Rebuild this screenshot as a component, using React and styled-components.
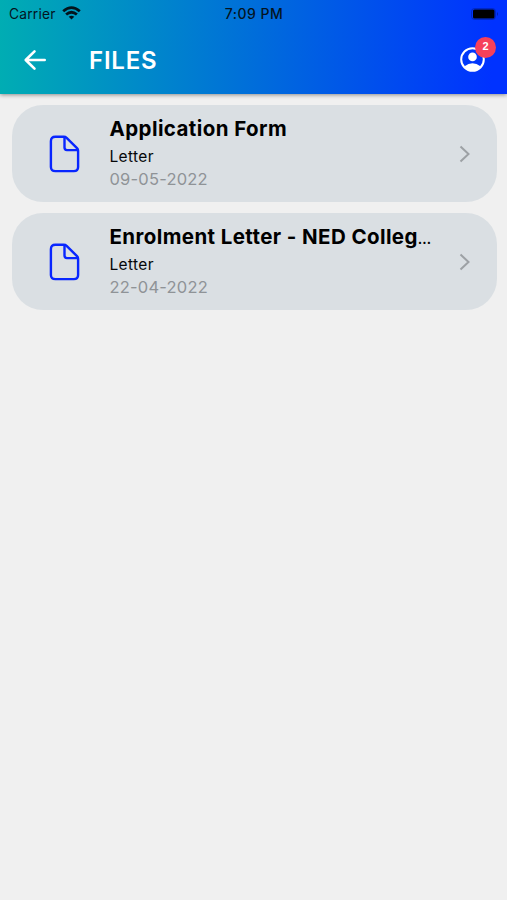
import React from 'react';
import styled, { createGlobalStyle } from 'styled-components';

const GlobalStyle = createGlobalStyle`
  *, *::before, *::after { box-sizing: border-box; }
  body { margin: 0; background: #f0f0f0; }
`;

const Screen = styled.main`
  width: 100%;
  min-height: 100vh;
  background: #f0f0f0;
  font-family: Inter, "Open Sans", sans-serif;
  color: #050709;
`;

const Header = styled.header`
  position: relative;
  height: 94px;
  background: linear-gradient(91deg, #00adb3 0%, #0032ff 97%);
  box-shadow: 0 1px 4px rgba(0, 0, 0, 0.42);
`;

const StatusBar = styled.div`
  display: grid;
  grid-template-columns: 1fr auto 1fr;
  align-items: center;
  height: 27px;
  padding: 0 8px 0 9px;
  line-height: 27px;
  color: #04141f;
`;

const Carrier = styled.div`
  display: flex;
  align-items: center;
  gap: 6px;
  padding-top: 1px;
  font-size: 13.8px;
  letter-spacing: 0.2px;

  svg { margin-bottom: 3px; }
`;

const Time = styled.time`
  font-size: 14px;
  font-weight: 500;
  line-height: 26px;
  letter-spacing: 0.5px;
`;

const BatterySlot = styled.div`
  display: flex;
  justify-content: flex-end;
`;

const NavBar = styled.div`
  display: flex;
  align-items: center;
  height: 65px;
  padding: 0 22px 0 23px;
`;

const IconButton = styled.button`
  position: relative;
  display: flex;
  padding: 0;
  border: 0;
  background: none;
  color: #fff;
`;

const Title = styled.h1`
  flex: 1;
  margin: 2px 0 0 42px;
  font-size: 24px;
  font-weight: 600;
  line-height: 30px;
  letter-spacing: 0.8px;
  color: #fff;
`;

const Badge = styled.span`
  position: absolute;
  top: -10px;
  right: -11px;
  width: 21px;
  height: 21px;
  border-radius: 50%;
  background: #f5405b;
  font-size: 11px;
  font-weight: 700;
  line-height: 19px;
  text-align: center;
  color: #fff;
`;

const FileList = styled.ul`
  display: flex;
  flex-direction: column;
  gap: 11px;
  margin: 0;
  padding: 10.5px 10.5px 0 11.5px;
  list-style: none;
`;

const FileCard = styled.li`
  display: flex;
  align-items: center;
  height: 97px;
  padding: 0 26px 0 37px;
  border-radius: 31px;
  background: #dadfe3;
`;

const Details = styled.div`
  flex: none;
  width: 324px;
  height: 97px;
  margin-left: 30px;
  padding-top: 12.5px;
`;

const FileName = styled.h2`
  height: 24px;
  margin: 0;
  font-size: 20.5px;
  font-weight: 700;
  line-height: 24px;
  letter-spacing: ${({ $tracking }) => $tracking}px;
  white-space: nowrap;
  color: #000;
`;

const Ellipsis = styled.span`
  font-size: 14px;
  font-weight: 600;
  line-height: 1;
  letter-spacing: 0;
`;

const Kind = styled.p`
  margin: 4px 0 0;
  font-size: 15.5px;
  line-height: 23px;
  letter-spacing: 0.35px;
`;

const DateText = styled.p`
  margin: 0;
  font-size: 16.5px;
  line-height: 23px;
  letter-spacing: 0.2px;
  color: #8f9397;
`;

const DocumentSvg = styled.svg`
  flex: none;
  margin-top: 1px;
`;

const Chevron = styled.svg`
  margin: 1px 0 0 auto;
`;

const files = [
  { name: 'Application Form', kind: 'Letter', date: '09-05-2022', tracking: 0.42 },
  { name: 'Enrolment Letter - NED Colleg', truncated: true, kind: 'Letter', date: '22-04-2022', tracking: 0.4 },
];

const WifiIcon = () => (
  <svg width="19" height="14" viewBox="0 0 19 14" fill="none" stroke="#03141c" strokeWidth="2.8">
    <path d="M1.2 5.2Q9.5-2 17.8 5.2" />
    <path d="M4.1 8.5Q9.5 3.9 14.9 8.5" />
    <path d="M9.5 13.5L6.7 10.7Q9.5 8.6 12.3 10.7Z" fill="#03141c" stroke="none" />
  </svg>
);

const BatteryIcon = () => (
  <svg width="28" height="12" viewBox="0 0 28 12">
    <rect x="0.5" y="0.5" width="24" height="11" rx="3" fill="none" stroke="#001a8a" strokeOpacity="0.5" />
    <rect x="2" y="1.5" width="21.5" height="9" rx="1.5" fill="#000" />
    <path d="M26 4Q28 6 26 8Z" fill="#001a8a" fillOpacity="0.7" />
  </svg>
);

const BackIcon = () => (
  <svg width="24" height="24" viewBox="0 0 24 24" fill="none" stroke="#fff" strokeWidth="2.6" strokeLinecap="round" strokeLinejoin="round">
    <path d="M21.7 12H3M11.5 3.3L2.7 12L11.5 20.7" />
  </svg>
);

const ProfileIcon = () => (
  <svg width="25" height="25" viewBox="0 0 25 25">
    <circle cx="12.5" cy="12.5" r="11.3" fill="none" stroke="#fff" strokeWidth="2" />
    <circle cx="12.5" cy="9.9" r="4.3" fill="#fff" />
    <path d="M4.5 19.3Q12.5 13.2 20.5 19.3Q17.7 23.8 12.5 23.8T4.5 19.3Z" fill="#fff" />
  </svg>
);

const DocumentIcon = () => (
  <DocumentSvg width="31" height="38" viewBox="0 0 31 38" fill="none" stroke="#0826ff" strokeWidth="2.4" strokeLinejoin="round">
    <path d="M6.4 1.7H14.8Q16.4 1.7 17.6 2.8L28 13.2Q29.1 14.3 29.1 15.8V31.9Q29.1 36.1 24.8 36.1H6.4Q1.9 36.1 1.9 31.9V6.2Q1.9 1.7 6.4 1.7Z" />
    <path d="M15.5 2.2V12.6Q15.5 15.1 18 15.1H28.6" />
  </DocumentSvg>
);

export default function App() {
  return (
    <>
      <GlobalStyle />
      <Screen>
        <Header>
          <StatusBar>
            <Carrier>Carrier <WifiIcon /></Carrier>
            <Time>7:09 PM</Time>
            <BatterySlot><BatteryIcon /></BatterySlot>
          </StatusBar>
          <NavBar>
            <IconButton aria-label="Back"><BackIcon /></IconButton>
            <Title>FILES</Title>
            <IconButton aria-label="Profile">
              <ProfileIcon />
              <Badge>2</Badge>
            </IconButton>
          </NavBar>
        </Header>
        <FileList>
          {files.map((file) => (
            <FileCard key={file.name}>
              <DocumentIcon />
              <Details>
                <FileName $tracking={file.tracking}>
                  {file.name}{file.truncated && <Ellipsis>…</Ellipsis>}
                </FileName>
                <Kind>{file.kind}</Kind>
                <DateText>{file.date}</DateText>
              </Details>
              <Chevron width="12" height="18" viewBox="0 0 12 18" fill="none" stroke="#9da1a5" strokeWidth="2">
                <path d="M1.5 1.5L9.5 9L1.5 16.5" />
              </Chevron>
            </FileCard>
          ))}
        </FileList>
      </Screen>
    </>
  );
}
